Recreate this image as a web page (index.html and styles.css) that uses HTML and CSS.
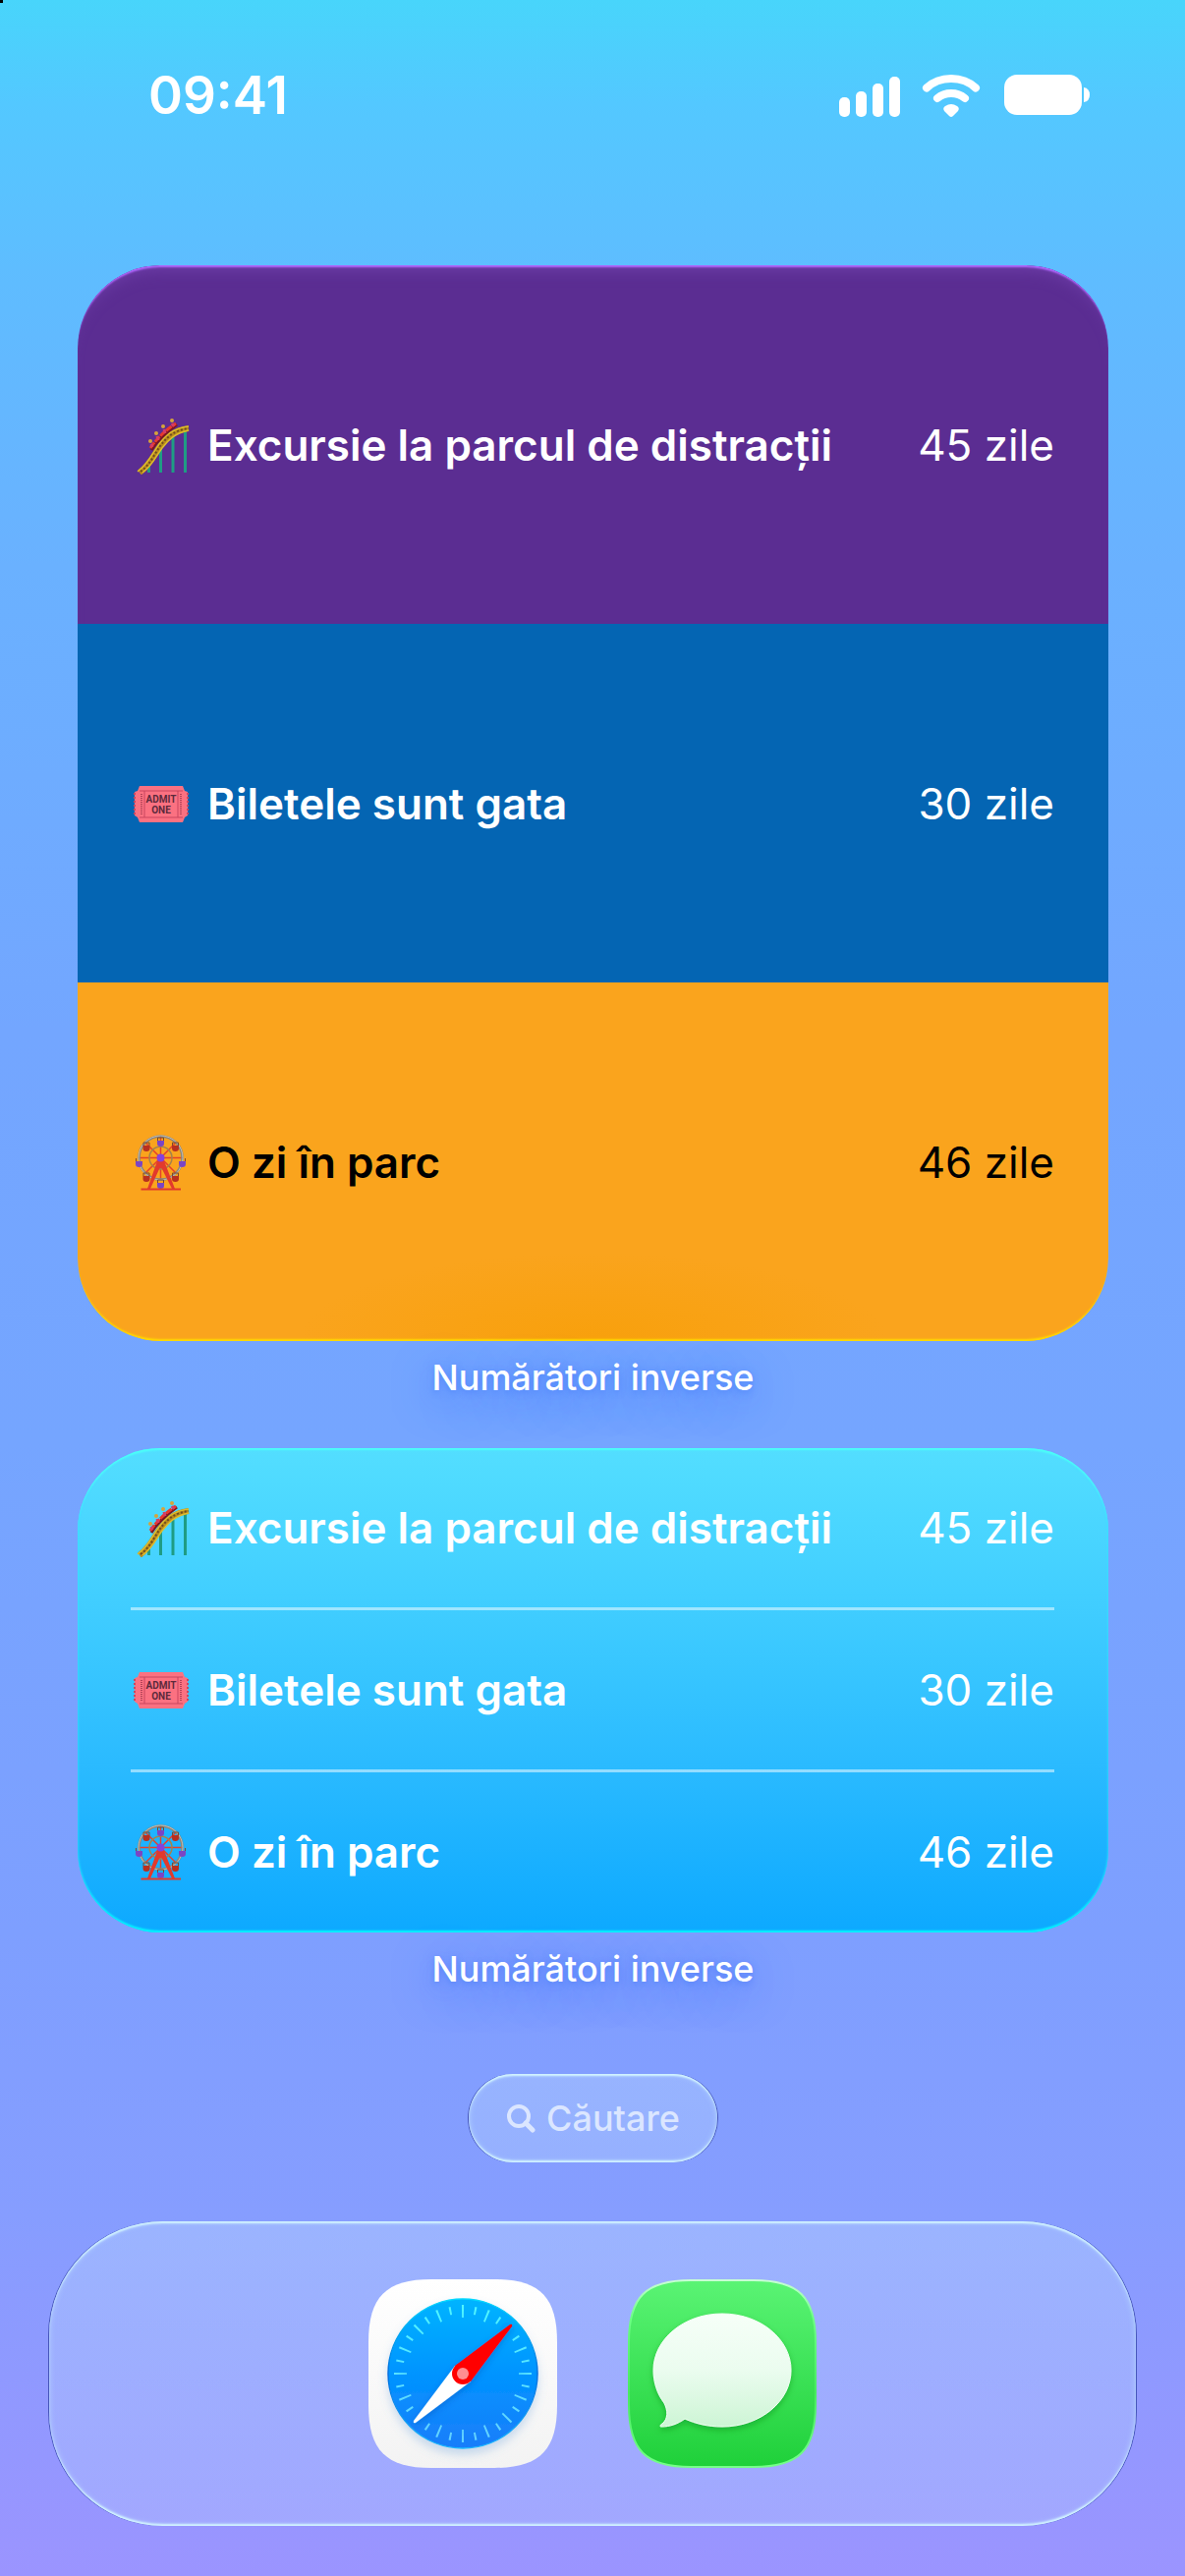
FILE: index.html
```html
<!DOCTYPE html>
<html lang="ro">
<head>
    <meta charset="UTF-8">
    <meta name="viewport" content="width=device-width, initial-scale=1.0">
    <title>Numărători inverse</title>
    <link rel="stylesheet" href="styles.css">
</head>
<body>
<!-- shared emoji drawings -->
<svg class="defs" width="0" height="0" aria-hidden="true">
    <symbol id="coaster" viewBox="0 0 64 60">
        <path d="M18.500 50v8M30.500 34v24M43 22v36M55.500 14v44" stroke="#1f9c84" stroke-width="3"/>
        <path d="M9 58C20 50 24 39 30 31S43 15 59 13" fill="none" stroke="#b88a1c" stroke-width="6"/>
        <path d="M7 57C18 49 23 37 29 29S42 13 59 11M12 58C22 51 26 41 32 33S45 18 59 15" fill="none" stroke="#dcbc2c" stroke-width="1.500"/>
        <path d="M10 57C20 50 24 39 30 31S43 15 59 13" fill="none" stroke="#6d4c20" stroke-width="2" stroke-dasharray="2 2"/>
        <path d="M21 35C27 25 36 17 47 9" fill="none" stroke="#7a1620" stroke-width="3"/>
        <path d="M20 33C26 24 35 15 46 8" fill="none" stroke="#e8382c" stroke-width="3" stroke-dasharray="7 1"/>
        <path d="M21 29l1 3M27 21l1 4M34 14l1 4M42 8l2 3" stroke="#d63b63" stroke-width="3"/>
        <g fill="#d6a33a"><circle cx="20" cy="26" r="2"/><circle cx="26" cy="18" r="2"/><circle cx="33" cy="11" r="2"/><circle cx="42" cy="5" r="2"/></g>
    </symbol>
    <symbol id="ticket" viewBox="0 0 64 60">
        <path d="M9 12H53L55 17L58 18V42L55 44L53 49H9L7 44L4 42V18L7 17Z" fill="#fb7181"/>
        <path d="M4 19V42M58 19V42" stroke="#c9475f" stroke-width="2" stroke-dasharray="2 2"/>
        <path d="M9 17H53M9 44H53M14 17V44M48 17V44" stroke="#c9475f" fill="none"/>
        <path d="M11 20V41M51 20V41" stroke="#b34458" stroke-width="2" stroke-dasharray="1 1"/>
        <text class="ticket-text" x="31" y="29" text-anchor="middle">ADMIT</text>
        <text class="ticket-text" x="31" y="40" text-anchor="middle">ONE</text>
    </symbol>
    <symbol id="wheel" viewBox="0 0 64 60">
        <path d="M8 25.500H53M30.500 3V48M14.500 9.500L46.500 41.500M46.500 9.500L14.500 41.500" stroke="#e5402b" stroke-width="1.500"/>
        <circle cx="30.500" cy="25.500" r="22" fill="none" stroke="#8d8478" stroke-width="2.500"/>
        <circle cx="30.500" cy="25.500" r="22.500" fill="none" stroke="#c0bcb2" stroke-width="1"/>
        <circle cx="30.500" cy="25.500" r="11.500" fill="none" stroke="#a5834c" stroke-width="1.500"/>
        <g fill="#7b45c4"><path d="M27 8h7v3q0 3-3.500 3T27 11zM5 29h7v3q0 3-3.500 3T5 32zM49 29h7v3q0 3-3.500 3T49 32zM27 51h7v3q0 3-3.500 3T27 54z"/></g>
        <g fill="#b8301f"><path d="M12.500 13h7v3q0 3-3.500 3t-3.500-3zM42 13h7v3q0 3-3.500 3T42 16zM12.500 44h7v3q0 3-3.500 3t-3.500-3zM42 44h7v3q0 3-3.500 3T42 47z"/></g>
        <path d="M13 13V10h6v3M42.500 13V10h6v3M13 44v-3h6v3M42.500 44v-3h6v3M27.500 8V5h6v3M27.500 51v-3h6v3M5.500 29v-3M55.500 29v-3" fill="none" stroke="#7a4a30"/>
        <path d="M17 57L28 26H33L45 57H42L32 37Q30.500 34 29 37L20 57Z" fill="#e23a2c"/>
        <path d="M10.500 57.500H51" stroke="#e23a2c" stroke-width="2"/>
        <circle cx="30.500" cy="25.500" r="4" fill="#8442dc"/>
    </symbol>
</svg>

<header class="status-bar">
    <time class="clock">09:41</time>
    <svg class="status-icons" width="256" height="42" viewBox="0 0 256 42" fill="#fff" aria-hidden="true">
        <rect x="0" y="23" width="11" height="20" rx="5"/>
        <rect x="17" y="17" width="11" height="26" rx="5"/>
        <rect x="34" y="9" width="11" height="34" rx="5"/>
        <rect x="51" y="2" width="11" height="41" rx="5"/>
        <path d="M89 13.500Q99 4 114 4T139 13.500M100 24Q106 19 114 19T128 24" fill="none" stroke="#fff" stroke-width="8" stroke-linecap="round"/>
        <path d="M108 32Q114 28 120 32Q123 34 121 37L116 42Q114 44 112 42L107 37Q105 34 108 32Z"/>
        <rect x="168" y="0" width="79" height="41" rx="13"/>
        <path d="M249 13Q255 14 255 20.500T249 28Z"/>
    </svg>
</header>

<main class="home">
    <section class="widget widget-large">
        <ul class="list">
            <li class="row purple">
                <svg class="emoji"><use href="#coaster"/></svg>
                <span class="name">Excursie la parcul de distracții</span>
                <span class="days">45 zile</span>
            </li>
            <li class="row blue">
                <svg class="emoji"><use href="#ticket"/></svg>
                <span class="name">Biletele sunt gata</span>
                <span class="days">30 zile</span>
            </li>
            <li class="row orange">
                <svg class="emoji"><use href="#wheel"/></svg>
                <span class="name">O zi în parc</span>
                <span class="days">46 zile</span>
            </li>
        </ul>
        <h2 class="caption">Numărători inverse</h2>
    </section>

    <section class="widget widget-medium">
        <ul class="list">
            <li class="row">
                <svg class="emoji"><use href="#coaster"/></svg>
                <span class="name">Excursie la parcul de distracții</span>
                <span class="days">45 zile</span>
            </li>
            <li class="row">
                <svg class="emoji"><use href="#ticket"/></svg>
                <span class="name">Biletele sunt gata</span>
                <span class="days">30 zile</span>
            </li>
            <li class="row">
                <svg class="emoji"><use href="#wheel"/></svg>
                <span class="name">O zi în parc</span>
                <span class="days">46 zile</span>
            </li>
        </ul>
        <h2 class="caption">Numărători inverse</h2>
    </section>

    <button class="search glass" type="button">
        <svg width="30" height="30" viewBox="0 0 30 30" fill="none" stroke="currentColor" aria-hidden="true">
            <circle cx="13" cy="13" r="10" stroke-width="4"/>
            <path d="M20 20L27 27" stroke-width="5" stroke-linecap="round"/>
        </svg>
        Căutare
    </button>
</main>

<nav class="dock glass">
    <a class="app" href="#" aria-label="Safari">
        <svg width="192" height="192" viewBox="0 0 192 192">
            <defs>
                <linearGradient id="safari-bg" x2="0" y2="1"><stop stop-color="#fff"/><stop offset="1" stop-color="#f3f3f3"/></linearGradient>
                <linearGradient id="safari-dial" x2="0" y2="1"><stop stop-color="#00b4ff"/><stop offset=".5" stop-color="#0094ff"/><stop offset="1" stop-color="#1a7dfa"/></linearGradient>
                <linearGradient id="safari-rim" x2="0" y2="1"><stop stop-color="#00d8ff"/><stop offset=".5" stop-color="#006fe0"/><stop offset="1" stop-color="#18b8ff"/></linearGradient>
                <linearGradient id="tick" x2="0" y2="1"><stop stop-color="#4ff4ff"/><stop offset="1" stop-color="#62d2ff"/></linearGradient>
                <filter id="dial-shadow" x="-20%" y="-20%" width="140%" height="140%"><feDropShadow dx="0" dy="6" stdDeviation="5" flood-color="#5d96d8" flood-opacity=".3"/></filter>
                <filter id="needle-shadow" x="-20%" y="-20%" width="140%" height="140%"><feDropShadow dx="0" dy="3" stdDeviation="3" flood-color="#003b9c" flood-opacity=".3"/></filter>
            </defs>
            <path d="M0 64C0 18 18 0 64 0H128C174 0 192 18 192 64V128C192 174 174 192 128 192H64C18 192 0 174 0 128Z" fill="url(#safari-bg)"/>
            <circle cx="96" cy="96" r="76" fill="url(#safari-dial)" stroke="url(#safari-rim)" stroke-width="1.500" filter="url(#dial-shadow)"/>
            <circle cx="96" cy="96" r="63.500" fill="none" stroke="url(#tick)" stroke-width="13" pathLength="320" stroke-dasharray="1.600 18.400" stroke-dashoffset=".8"/>
            <circle cx="96" cy="96" r="65" fill="none" stroke="url(#tick)" stroke-width="8" pathLength="320" stroke-dasharray="1.600 18.400" stroke-dashoffset="10.800"/>
            <!-- needle covers the two diagonal ticks -->
            <circle cx="141" cy="51" r="7" fill="#00a2ff"/>
            <circle cx="51" cy="141" r="7" fill="#0f87fc"/>
            <g filter="url(#needle-shadow)">
                <path d="M46 144Q45 147 48 146L104 104L88 88Z" fill="#fff"/>
                <path d="M144 46Q147 45 146 48L104 104L88 88Z" fill="#f00"/>
                <circle cx="96" cy="96" r="11" fill="#f00"/>
            </g>
            <circle cx="96" cy="96" r="6" fill="#ff8d91"/>
        </svg>
    </a>
    <a class="app" href="#" aria-label="Mesaje">
        <svg width="192" height="192" viewBox="0 0 192 192">
            <defs>
                <linearGradient id="msg-bg" x2="0" y2="1"><stop stop-color="#5af474"/><stop offset="1" stop-color="#1fd03a"/></linearGradient>
                <linearGradient id="msg-rim" x2="0" y2="1"><stop stop-color="#c8ffd4"/><stop offset=".2" stop-color="#6dff86"/><stop offset=".6" stop-color="#48ea60"/><stop offset="1" stop-color="#76ff8a"/></linearGradient>
                <linearGradient id="bubble" x2="0" y2="1"><stop stop-color="#f6fff8"/><stop offset=".5" stop-color="#ebfcef"/><stop offset="1" stop-color="#cdf5d5"/></linearGradient>
                <filter id="bubble-shadow" x="-20%" y="-20%" width="140%" height="140%"><feDropShadow dx="0" dy="3" stdDeviation="3" flood-color="#007c16" flood-opacity=".4"/></filter>
            </defs>
            <path d="M1 64C1 18 18 1 64 1H128C174 1 191 18 191 64V128C191 174 174 191 128 191H64C18 191 1 174 1 128Z" fill="url(#msg-bg)" stroke="url(#msg-rim)" stroke-width="2"/>
            <path d="M96 35C135 35 166 61 166 92.500S135 150 96 150C82 150 69 147 58 142C51 147 43 150 34 150C32 150 33 148 35 147C41 142 41 134 37 126C30 117 26 105 26 92.500C26 61 57 35 96 35Z" fill="url(#bubble)" stroke="#f4fff6" filter="url(#bubble-shadow)"/>
        </svg>
    </a>
</nav>
</body>
</html>
```
FILE: styles.css
```css
* {
    box-sizing: border-box;
}
body {
    margin: 0;
    min-height: 100vh;
    color: white;
    font-family: Inter, "Liberation Sans", sans-serif;
    background: linear-gradient(to bottom, #48d5fb 0%, #53c8ff 4%, #5fbcff 11%, #6ab1ff 22%, #73a6ff 40%, #75a5ff 56%, #7e9fff 75%, #869dff 86%, #9b94ff 100%);
}
/* sensor dot in the screen corner */
body::before {
    content: "";
    position: absolute;
    width: 3px;
    height: 3px;
    background: black;
}
.defs {
    display: none;
}
.status-bar {
    display: flex;
    justify-content: space-between;
    align-items: center;
    height: 194px;
    padding: 0 96px 0 151px;
}
.status-icons {
    overflow: visible;
}
.clock {
    font-size: 53px;
    font-weight: 600;
}
.home {
    display: flex;
    flex-direction: column;
    align-items: center;
    padding: 76px 78px 0 79px;
}
.widget {
    width: 100%;
}
.list {
    list-style: none;
    margin: 0;
    padding: 0;
    border-radius: 84px;
    overflow: hidden;
}
.row {
    display: flex;
    align-items: center;
    gap: 14px;
    font-size: 44px;
    line-height: 54px;
}
.emoji {
    width: 64px;
    height: 60px;
    margin: -3px 0;
    flex-shrink: 0;
}
.ticket-text {
    font-family: Roboto, sans-serif;
    font-size: 10px;
    font-weight: 700;
    fill: #5d2a3c;
}
.name {
    flex-grow: 1;
    font-weight: 600;
}
.widget-large .row {
    padding: 156px 55px 155px 54px;
}
.purple {
    background: #5b2d92;
    border-radius: 84px 84px 0 0;
    box-shadow: inset 0 3px 2px -1px #b267ff, inset 0 16px 16px -12px #6f40ab;
}
.blue {
    background: #0465b3;
}
.orange {
    color: black;
    background: radial-gradient(ellipse 300px 90px at 50% 100%, #f8a00c, #faa41d);
    border-radius: 0 0 84px 84px;
    box-shadow: inset 0 -3px 2px -1px #ffdc00;
}
.widget-medium .list {
    padding: 0 55px 1px 54px;
    background: linear-gradient(to bottom, #53deff, #40cdff 33%, #2abaff 66%, #0da9ff);
    box-shadow: inset 0 3px 2px -1px #4cfff8, inset 0 -3px 2px -1px #00f6ff, inset 0 0 3px #35e4ff;
}
.widget-medium .row {
    padding: 54px 0;
}
.widget-medium .row + .row {
    border-top: 3px solid rgba(255, 255, 255, 0.5);
}
.caption {
    margin: 15px 0 50px;
    font-size: 36px;
    line-height: 44px;
    font-weight: 500;
    text-align: center;
    text-shadow: 0 2px 6px rgba(60, 115, 245, 0.5), 0 10px 40px rgba(50, 110, 255, 0.8);
}
.glass {
    background: linear-gradient(to bottom, rgba(190, 220, 255, 0.35), rgba(190, 220, 255, 0.3));
    box-shadow: inset 0 3px 2px -1px #d2f4ff, inset 0 -3px 2px -1px #d2f4ff, inset 0 0 6px rgba(190, 225, 255, 0.8), -1px 0 0 #4656bb, 1px 0 0 #4656bb;
}
.search {
    display: flex;
    align-items: center;
    gap: 11px;
    margin: 35px 0 60px;
    padding: 22px 38px;
    border: none;
    border-radius: 45px;
    color: #dbe6ff;
    font-family: inherit;
    font-size: 36px;
    font-weight: 500;
    line-height: 46px;
}
.dock {
    display: flex;
    justify-content: center;
    gap: 72px;
    margin: 0 50px;
    padding: 59px;
    border-radius: 116px;
    background: linear-gradient(to bottom, rgba(185, 215, 255, 0.4), rgba(180, 200, 255, 0.35));
}
.app,
.app svg {
    display: block;
}
```
